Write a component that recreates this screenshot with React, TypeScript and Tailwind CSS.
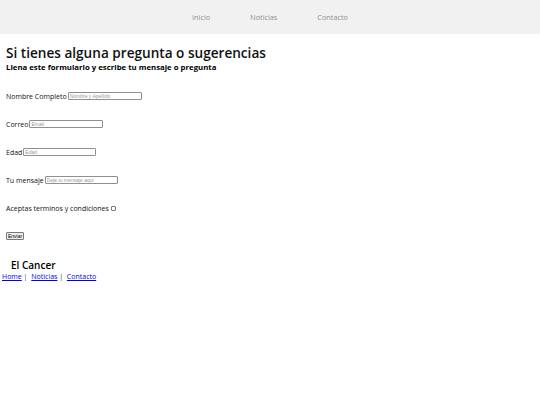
import React from "react";

const os = { fontFamily: '"Open Sans", sans-serif' };

function Field({ label, placeholder, inputW }: { label: string; placeholder: string; inputW: string }) {
  return (
    <div className="flex items-center h-[8px] gap-[1px]">
      <span className="text-[7px] text-[#111] leading-none">{label}</span>
      <input
        placeholder={placeholder}
        className={`${inputW} h-[8px] border border-[#8f8f8f] rounded-[1px] px-[1px] text-[5px] leading-none bg-white placeholder:text-[#999] font-['Liberation_Sans',sans-serif]`}
      />
    </div>
  );
}

export default function App() {
  return (
    <div className="w-[540px] h-[405px] bg-white" style={os}>
      <nav className="h-[34px] bg-[#f1f1f1] flex items-center justify-center gap-[40px] text-[7.3px] text-[#909090] font-normal">
        <span>Inicio</span>
        <span>Noticias</span>
        <span>Contacto</span>
      </nav>
      <div className="px-[6px] pt-[10px]">
        <h1 className="text-[13.6px] font-semibold text-[#111] leading-[18px]">Si tienes alguna pregunta o sugerencias</h1>
        <h2 className="text-[7.8px] font-bold text-[#000] leading-[10px]">Llena este formulario y escribe tu mensaje o pregunta</h2>
        <form className="flex flex-col gap-[20px] mt-[20px]">
          <Field label="Nombre Completo" placeholder="Nombre y Apellido" inputW="w-[74px]" />
          <Field label="Correo" placeholder="Email" inputW="w-[74px]" />
          <Field label="Edad" placeholder="Edad" inputW="w-[73px]" />
          <Field label="Tu mensaje" placeholder="Deja tu mensaje aqui" inputW="w-[73px]" />
          <div className="flex items-center h-[8px] gap-[1px]">
            <span className="text-[7px] text-[#111] leading-none">Aceptas terminos y condiciones</span>
            <input type="checkbox" className="w-[5px] h-[5px] ml-[1px] appearance-none border border-[#777] rounded-[1px] bg-white" />
          </div>
          <div className="flex items-center h-[8px]">
            <button type="button" className="h-[8px] px-[1px] text-[5px] leading-none border border-[#777] rounded-[1px] bg-[#efefef] font-['Liberation_Sans',sans-serif]">Enviar</button>
          </div>
        </form>
      </div>
      <div className="mt-[19px]">
        <div className="pl-[11px] text-[10px] font-semibold text-[#000] leading-[13px]">El Cancer</div>
        <div className="pl-[2px] text-[7px] leading-[9px] text-[#333]">
          <a href="#" className="text-[#0000ee] underline">Home</a>
          <span> | </span>
          <a href="#" className="ml-[2px] text-[#0000ee] underline">Noticias</a>
          <span> | </span>
          <a href="#" className="ml-[2px] text-[#0000ee] underline">Contacto</a>
        </div>
      </div>
    </div>
  );
}
